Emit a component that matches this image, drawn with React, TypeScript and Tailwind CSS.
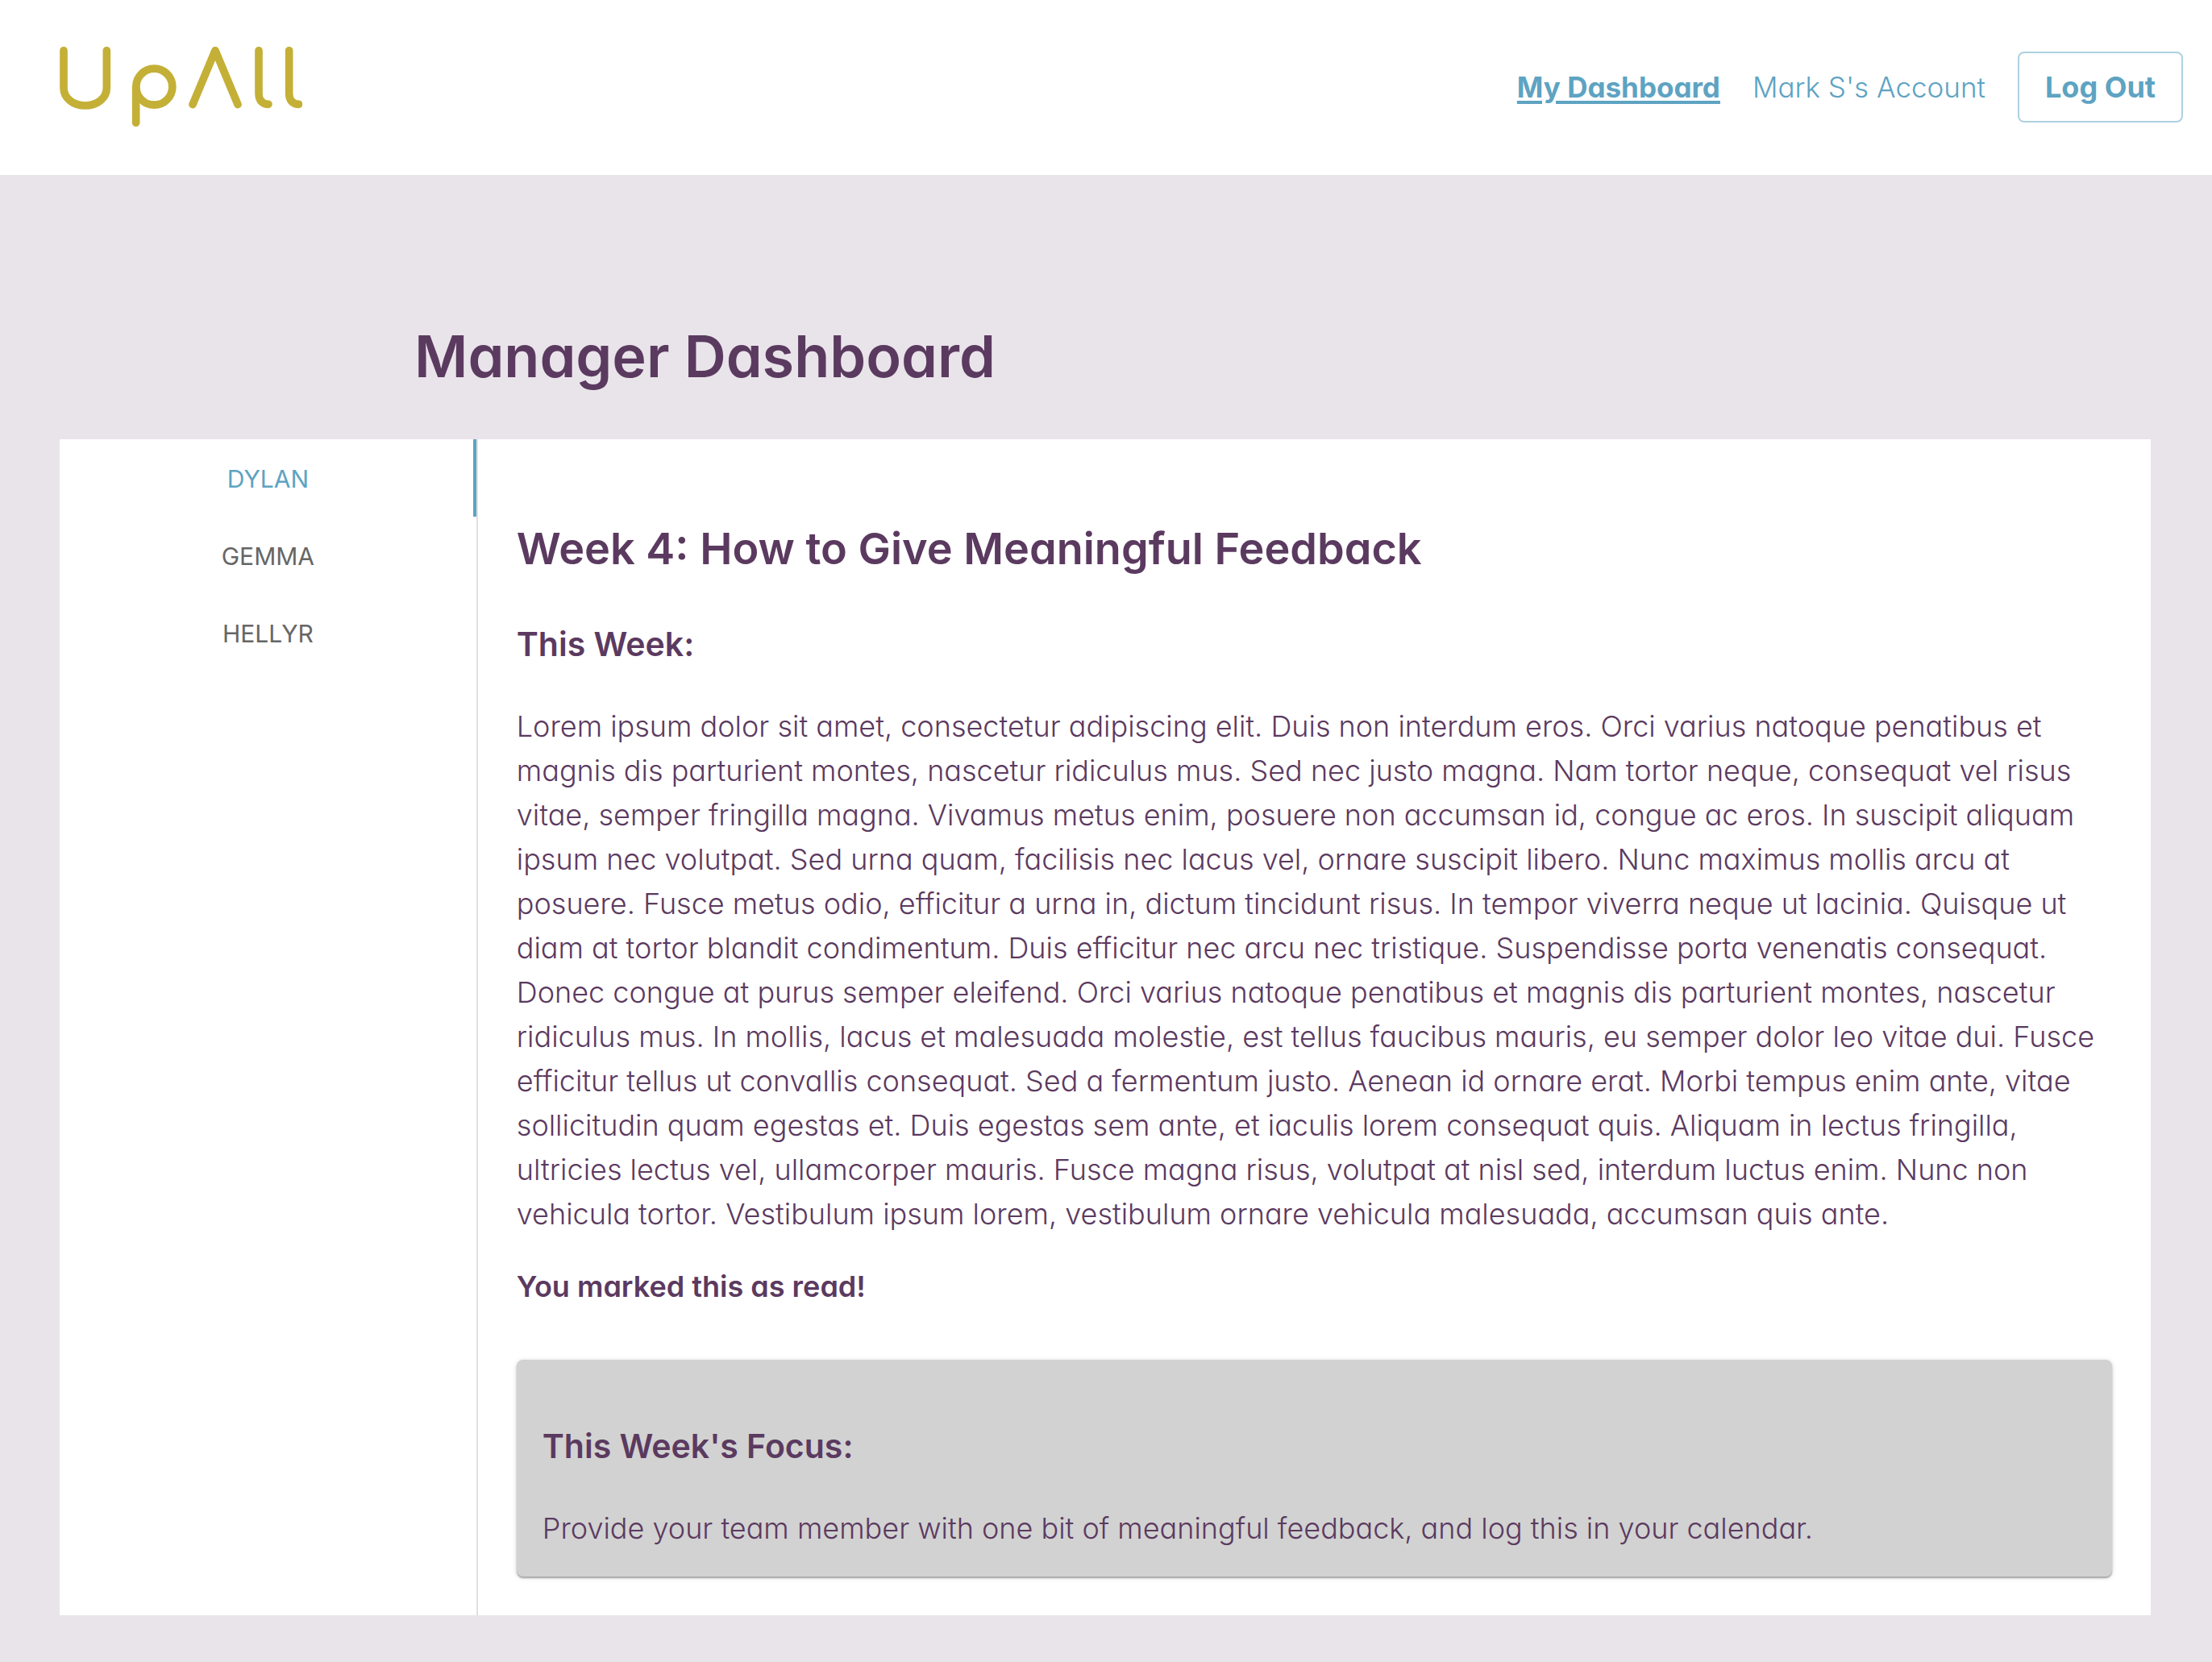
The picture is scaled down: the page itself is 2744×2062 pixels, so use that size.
const members = ['Dylan', 'Gemma', 'Hellyr'];

const lines = [
  'Lorem ipsum dolor sit amet, consectetur adipiscing elit. Duis non interdum eros. Orci varius natoque penatibus et',
  'magnis dis parturient montes, nascetur ridiculus mus. Sed nec justo magna. Nam tortor neque, consequat vel risus',
  'vitae, semper fringilla magna. Vivamus metus enim, posuere non accumsan id, congue ac eros. In suscipit aliquam',
  'ipsum nec volutpat. Sed urna quam, facilisis nec lacus vel, ornare suscipit libero. Nunc maximus mollis arcu at',
  'posuere. Fusce metus odio, efficitur a urna in, dictum tincidunt risus. In tempor viverra neque ut lacinia. Quisque ut',
  'diam at tortor blandit condimentum. Duis efficitur nec arcu nec tristique. Suspendisse porta venenatis consequat.',
  'Donec congue at purus semper eleifend. Orci varius natoque penatibus et magnis dis parturient montes, nascetur',
  'ridiculus mus. In mollis, lacus et malesuada molestie, est tellus faucibus mauris, eu semper dolor leo vitae dui. Fusce',
  'efficitur tellus ut convallis consequat. Sed a fermentum justo. Aenean id ornare erat. Morbi tempus enim ante, vitae',
  'sollicitudin quam egestas et. Duis egestas sem ante, et iaculis lorem consequat quis. Aliquam in lectus fringilla,',
  'ultricies lectus vel, ullamcorper mauris. Fusce magna risus, volutpat at nisl sed, interdum luctus enim. Nunc non',
  'vehicula tortor. Vestibulum ipsum lorem, vestibulum ornare vehicula malesuada, accumsan quis ante.',
];

function Logo() {
  return (
    <svg
      role="img"
      aria-label="UpAll"
      viewBox="72 54 903 298"
      className="w-[301px]"
      fill="none"
      stroke="#c4b037"
      strokeWidth="29"
      strokeLinecap="round"
      strokeLinejoin="round"
    >
      <path d="M87 68V207C87 245 122 273 167 273C212 273 247 245 247 207V68" />
      <path d="M356 337V203" />
      <circle cx="424" cy="203" r="67.5" />
      <path d="M567 269L651 68L735 269" />
      <path d="M813 68V228C813 254 827 268 849 268" />
      <path d="M926 68V228C926 254 940 268 962 268" />
    </svg>
  );
}

function Header() {
  return (
    <header className="flex items-start justify-between bg-white pt-[58px] pr-9 pb-[60px] pl-[74px]">
      <a href="#home">
        <Logo />
      </a>
      <nav className="mt-1.5 flex items-center gap-10 text-[35px] leading-[54px] font-light text-[#5ea3c2]">
        <a href="#dashboard" className="font-bold underline decoration-4 underline-offset-4">
          My Dashboard
        </a>
        <a href="#account">Mark S's Account</a>
        <button type="button" className="rounded-lg border-2 border-[#aed1e0] px-8 py-[15px] text-[36px] font-bold">
          Log Out
        </button>
      </nav>
    </header>
  );
}

function MemberTabs() {
  return (
    <div role="tablist" aria-orientation="vertical" className="flex w-1/5 flex-col border-r-2 border-[#e0e0e0] text-[30px]">
      {members.map((name, i) => (
        <button
          key={name}
          type="button"
          role="tab"
          aria-selected={i === 0}
          className={
            i === 0
              ? 'relative h-24 pt-0.5 uppercase text-[#5ea3c2]'
              : 'relative h-24 pt-0.5 uppercase text-[#666666]'
          }
        >
          {name}
          {i === 0 && <span className="absolute inset-y-0 right-0 w-1 bg-[#5ea3c2]" />}
        </button>
      ))}
    </div>
  );
}

export default function App() {
  return (
    <div className="min-h-screen bg-[#e9e4ea] font-['Inter',sans-serif] [font-feature-settings:'cv11'] text-[#5b3a60]">
      <Header />
      <main className="pt-[171px] pr-[76px] pb-[58px] pl-[74px]">
        <h1 className="mx-auto mb-[49px] max-w-[1714px] text-[72px] leading-[108px] font-semibold">
          Manager Dashboard
        </h1>
        <div className="flex bg-white">
          <MemberTabs />
          <section role="tabpanel" className="flex-1 p-12 text-[36px] leading-[55px] font-light">
            <h2 className="mt-12 text-[54px] leading-[80px] font-semibold">
              Week 4: How to Give Meaningful Feedback
            </h2>
            <h3 className="mt-[46px] text-[41px] leading-[64px] font-semibold">This Week:</h3>
            <p className="mt-[43px]">
              {lines.map((line) => (
                <span key={line}>
                  {line}
                  <br />
                </span>
              ))}
            </p>
            <p className="mt-[35px] font-semibold">You marked this as read!</p>
            <div className="mt-[63px] rounded-lg bg-[#d2d2d2] px-8 pt-[75px] pb-8 shadow-[0_2px_2px_rgba(0,0,0,0.3),0_1px_6px_rgba(0,0,0,0.15)]">
              <h3 className="text-[41px] leading-[64px] font-semibold">This Week's Focus:</h3>
              <p className="mt-[43px]">
                Provide your team member with one bit of meaningful feedback, and log this in your calendar.
              </p>
            </div>
          </section>
        </div>
      </main>
    </div>
  );
}
